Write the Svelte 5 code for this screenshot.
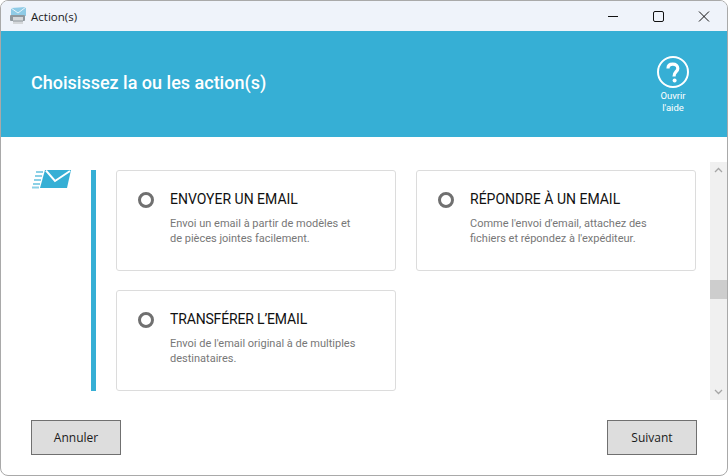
<script lang="ts">
	const actions = [
		{
			title: 'ENVOYER UN EMAIL',
			lines: ['Envoi un email à partir de modèles et', 'de pièces jointes facilement.']
		},
		{
			title: 'RÉPONDRE À UN EMAIL',
			lines: ["Comme l'envoi d'email, attachez des", "fichiers et répondez à l'expéditeur."]
		},
		{
			title: 'TRANSFÉRER L’EMAIL',
			lines: ["Envoi de l'email original à de multiples", 'destinataires.']
		}
	];
</script>

<div class="window">
	<div class="titlebar">
		<svg class="app-icon" width="18" height="18" viewBox="0 0 18 18">
			<path d="M2 1 L17 0 V9 L2 10 Z" fill="#8fcbe6" />
			<path d="M2 1 L9 6 L17 0" fill="none" stroke="#e8f4fa" stroke-width="1" />
			<rect x="1" y="8" width="15" height="6" rx="1" fill="#8f979d" />
			<rect x="4" y="10" width="10" height="7" fill="#d4d7da" />
			<path d="M4 14H14" stroke="#8f979d" />
		</svg>
		<span class="title">Action(s)</span>
		<div class="controls">
			<svg width="46" height="30" viewBox="0 0 46 30"><path d="M19 15.5H29" stroke="#111" fill="none" /></svg>
			<svg width="46" height="30" viewBox="0 0 46 30"><rect x="18.5" y="10.5" width="10" height="10" rx="1.5" stroke="#111" fill="none" /></svg>
			<svg width="46" height="30" viewBox="0 0 46 30"><path d="M18 10.5L28 20.5M28 10.5L18 20.5" stroke="#111" fill="none" /></svg>
		</div>
	</div>

	<header class="banner">
		<h1>Choisissez la ou les action(s)</h1>
		<div class="help">
			<svg width="32" height="32" viewBox="0 0 32 32">
				<circle cx="16" cy="16" r="15" fill="none" stroke="#fff" stroke-width="2" />
				<path d="M11 12.5C11 9.5 13.2 8.2 15.8 8.2C18.6 8.2 20.8 9.8 20.8 12.4C20.8 15.6 16.8 16 17 20.5" fill="none" stroke="#fff" stroke-width="3.2" />
				<circle cx="17.6" cy="24.6" r="2" fill="#fff" />
			</svg>
			<span>Ouvrir</span>
			<span>l'aide</span>
		</div>
	</header>

	<main class="content">
		<svg class="mail" width="40" height="19" viewBox="0 0 40 19">
			<path d="M14 0H40L36 18H9Z" fill="#36afd5" />
			<path d="M15 0.5L24 11L39 1" fill="none" stroke="#fff" stroke-width="2" />
			<path d="M5 2H12M4 6H11M3 10H10M2 14H9M1 17.5H8" stroke="#8bd0e6" stroke-width="2" />
		</svg>
		<div class="rule"></div>
		<div class="cards">
			{#each actions as action}
				<div class="card">
					<div class="radio"></div>
					<div class="text">
						<h2>{action.title}</h2>
						<p>{action.lines[0]}<br />{action.lines[1]}</p>
					</div>
				</div>
			{/each}
		</div>
		<div class="scrollbar">
			<svg width="17" height="17" viewBox="0 0 17 17"><path d="M5 10L8.5 6.5L12 10" fill="none" stroke="#a6a6a6" stroke-width="1.3" /></svg>
			<div class="track"><div class="thumb"></div></div>
			<svg width="17" height="17" viewBox="0 0 17 17"><path d="M5 7L8.5 10.5L12 7" fill="none" stroke="#a6a6a6" stroke-width="1.3" /></svg>
		</div>
	</main>

	<footer class="footer">
		<button>Annuler</button>
		<button>Suivant</button>
	</footer>
</div>

<style>
	:global(body) {
		margin: 0;
		background: #fff;
	}

	.window {
		width: 728px;
		height: 476px;
		box-sizing: border-box;
		border: 1px solid #a9a9a9;
		border-radius: 8px;
		overflow: hidden;
		display: flex;
		flex-direction: column;
		background: #fff;
		font-family: 'Open Sans', sans-serif;
	}

	.titlebar {
		height: 30px;
		background: #eff3fa;
		display: flex;
		align-items: center;
		padding-left: 8px;
		flex-shrink: 0;
	}

	.app-icon {
		margin-right: 4px;
	}

	.title {
		font-size: 11.5px;
		color: #1a1a1a;
	}

	.controls {
		margin-left: auto;
		display: flex;
	}

	.banner {
		height: 106px;
		background: #36afd5;
		display: flex;
		justify-content: space-between;
		align-items: flex-start;
		padding: 0 38px 0 30px;
		flex-shrink: 0;
	}

	h1 {
		margin: 40px 0 0;
		font: 500 18px/24px Roboto, sans-serif;
		color: #fff;
	}

	.help {
		margin-top: 25px;
		width: 32px;
		display: flex;
		flex-direction: column;
		align-items: center;
		font: 400 9.5px/12px Roboto, sans-serif;
		color: #fff;
	}

	.help svg {
		margin-bottom: 2px;
		flex-shrink: 0;
	}

	.content {
		flex: 1;
		display: flex;
		padding: 25px 0 0 30px;
		min-height: 0;
	}

	.mail {
		flex-shrink: 0;
		margin: 8px 20px 0 0;
	}

	.rule {
		width: 5px;
		height: 221px;
		margin-top: 8px;
		background: #36afd5;
		flex-shrink: 0;
	}

	.cards {
		display: grid;
		grid-template-columns: 280px 280px;
		grid-auto-rows: 101px;
		gap: 19px 20px;
		margin: 8px 14px 0 20px;
		align-content: start;
	}

	.card {
		box-sizing: border-box;
		border: 1px solid #dcdcdc;
		border-radius: 3px;
		display: flex;
		padding: 18px 20px 0 21px;
	}

	.card:nth-child(3) h2 {
		letter-spacing: -0.16px;
	}

	.radio {
		box-sizing: border-box;
		width: 16px;
		height: 16px;
		margin-top: 3px;
		border: 3px solid #707070;
		border-radius: 50%;
		flex-shrink: 0;
	}

	.text {
		margin-left: 16px;
	}

	h2 {
		margin: 0;
		font: 400 14px/20px Roboto, sans-serif;
		color: #111;
	}

	p {
		margin: 7px 0 0;
		font: 400 11px/15px Roboto, sans-serif;
		color: #777;
	}

	.scrollbar {
		width: 17px;
		height: 238px;
		margin-left: auto;
		background: #f0f0f0;
		display: flex;
		flex-direction: column;
		flex-shrink: 0;
	}

	.track {
		flex: 1;
		padding-top: 101px;
	}

	.thumb {
		height: 19px;
		background: #cdcdcd;
	}

	.footer {
		height: 67px;
		flex-shrink: 0;
		display: flex;
		justify-content: space-between;
		padding: 12px 30px 0;
		box-sizing: border-box;
		align-items: flex-start;
	}

	button {
		box-sizing: border-box;
		width: 90px;
		height: 35px;
		background: #dddddd;
		border: 1px solid #707070;
		font: 400 12px 'Open Sans', sans-serif;
		color: #1a1a1a;
	}
</style>
